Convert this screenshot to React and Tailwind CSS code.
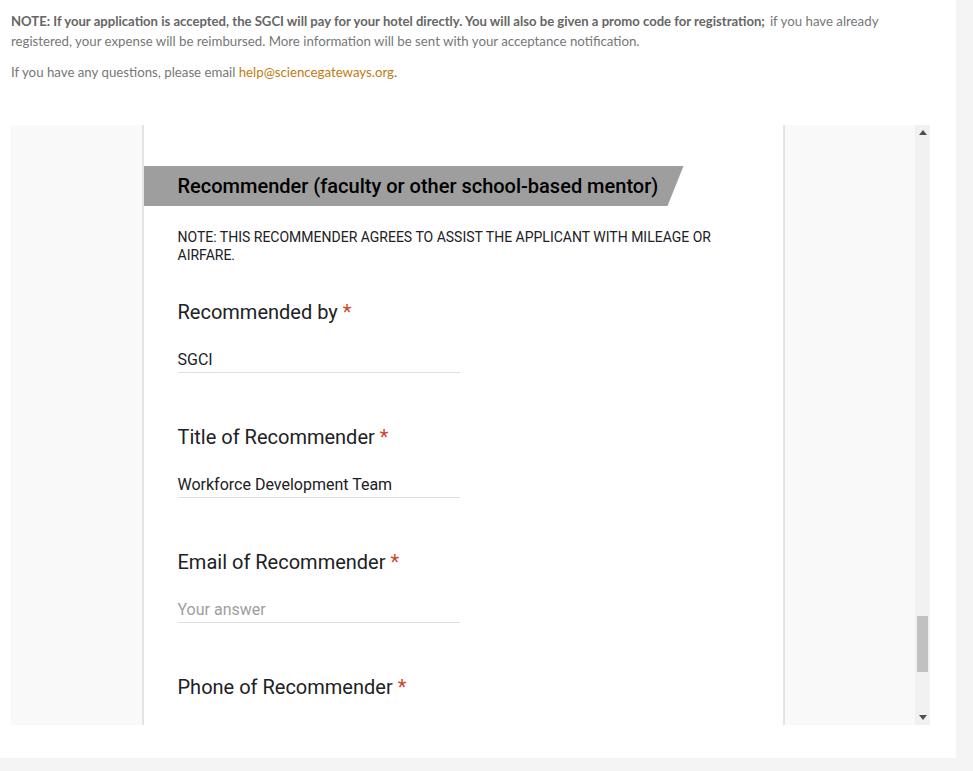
export default function App() {
  const questions = [
    { title: "Recommended by", value: "SGCI" },
    { title: "Title of Recommender", value: "Workforce Development Team" },
    { title: "Email of Recommender", value: "", placeholder: "Your answer" },
    { title: "Phone of Recommender", value: null },
  ];
  return (
    <div className="min-h-screen w-full bg-[#f4f4f4]">
      <div className="w-[956px] h-[758px] bg-white">
        <div className="pl-[11px] pr-[60px] pt-[11px] text-[13.25px] leading-[20px] text-[#777777] font-['Lato','Liberation_Sans',sans-serif]">
          <p>
            <strong className="font-bold text-[#666666] text-[13.1px]">
              NOTE: If your application is accepted, the SGCI will pay for your hotel directly. You will also be given a promo code for registration;
            </strong>
            <span className="ml-[5px]">
              if you have already registered, your expense will be reimbursed. More information will be sent with your acceptance notification.
            </span>
          </p>
          <p className="mt-[11px]">
            If you have any questions, please email{" "}
            <span className="text-[#c27a12]">help@sciencegateways.org</span>.
          </p>
        </div>

        <div className="ml-[11px] mt-[43px] w-[919px] h-[600px] bg-[#f9f9f9] flex overflow-hidden">
          <div className="flex-1 flex justify-center overflow-hidden">
            <div className="w-[643px] h-full bg-white border-x-2 border-[#e3e3e3] pt-[41px] font-['Roboto','Liberation_Sans',sans-serif] text-[#202124]">
              <div className="w-[540px] h-[40px] bg-[#9e9e9e] pl-[34px] flex items-center [clip-path:polygon(0_0,100%_0,calc(100%-16px)_100%,0_100%)]">
                <span className="text-[20px] font-medium text-black">
                  Recommender (faculty or other school-based mentor)
                </span>
              </div>
              <div className="px-[34px]">
                <p className="mt-[22px] text-[14px] leading-[18px] uppercase text-[#202124]">
                  NOTE: This recommender agrees to assist the applicant with mileage or airfare.
                </p>
                <div className="mt-[36px] flex flex-col gap-[52px]">
                  {questions.map((q) => (
                    <div key={q.title} className="flex flex-col">
                      <div className="text-[20px] leading-[24px] text-[#202124]">
                        {q.title}
                        <span className="text-[#d0432a] ml-[5px]">*</span>
                      </div>
                      {q.value !== null && (
                        <div className="mt-[24px] w-[282px] h-[25px] border-b border-[#e0e0e0] text-[16px] leading-[24px]">
                          {q.value ? (
                            <span className="text-[#202124]">{q.value}</span>
                          ) : (
                            <span className="text-[#9e9e9e]">{q.placeholder}</span>
                          )}
                        </div>
                      )}
                    </div>
                  ))}
                </div>
              </div>
            </div>
          </div>
          <div className="w-[15px] h-full bg-[#f1f1f1] flex flex-col items-center justify-between py-[4px]">
            <svg width="8" height="5" viewBox="0 0 8 5" className="mt-[1px]">
              <polygon points="4,0 8,5 0,5" fill="#505050" />
            </svg>
            <div className="flex-1 w-full flex flex-col">
              <div className="h-[481px]" />
              <div className="mx-[2px] h-[56px] bg-[#c1c1c1]" />
            </div>
            <svg width="8" height="5" viewBox="0 0 8 5" className="mb-[1px]">
              <polygon points="0,0 8,0 4,5" fill="#505050" />
            </svg>
          </div>
        </div>
      </div>
    </div>
  );
}
